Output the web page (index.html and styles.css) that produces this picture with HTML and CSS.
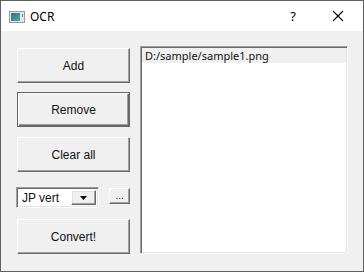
FILE: index.html
```html
<!DOCTYPE html>
<html>
<head>
<meta charset="utf-8">
<link rel="stylesheet" href="styles.css">
</head>
<body>
<div class="window">
  <div class="titlebar">
    <svg class="appicon" width="16" height="12" viewBox="0 0 16 12">
      <defs>
        <linearGradient id="g" x1="0" y1="0" x2="1" y2="1">
          <stop offset="0" stop-color="#2e6f8e"/>
          <stop offset="1" stop-color="#4fae9a"/>
        </linearGradient>
      </defs>
      <rect x="0.5" y="0.5" width="15" height="11" fill="#e8e8e8" stroke="#9a9a9a"/>
      <rect x="2" y="2" width="9" height="8" fill="url(#g)"/>
      <rect x="13" y="3" width="1" height="3" fill="#4a8a9a"/>
    </svg>
    <span class="title">OCR</span>
    <span class="spacer"></span>
    <span class="help">?</span>
    <svg class="close" width="12" height="12" viewBox="0 0 12 12">
      <path d="M1 1 L11 11 M11 1 L1 11" stroke="#000" stroke-width="1.1"/>
    </svg>
  </div>
  <div class="content">
    <div class="left">
      <div class="btn b-add">Add</div>
      <div class="btn b-remove default">Remove</div>
      <div class="btn b-clear">Clear all</div>
      <div class="combo-row">
        <div class="combo">
          <span class="combo-text">JP vert</span>
          <span class="combo-btn"><svg width="7" height="4" viewBox="0 0 7 4"><path d="M0 0 H7 L3.5 4 Z" fill="#000"/></svg></span>
        </div>
        <div class="btn small">...</div>
      </div>
      <div class="btn b-convert">Convert!</div>
    </div>
    <div class="list">
      <div class="item sel">D:/sample/sample1.png</div>
    </div>
  </div>
</div>
</body>
</html>
```
FILE: styles.css
```css
html, body { margin: 0; padding: 0; }
body { width: 364px; height: 272px; overflow: hidden; background: #f0f0f0; }
.window {
  box-sizing: border-box;
  width: 364px; height: 272px;
  border: 1px solid #5f5f5f;
  display: flex; flex-direction: column;
  background: #f0f0f0;
}
.titlebar {
  height: 30px; background: #fff;
  display: flex; align-items: center;
  font-family: "Noto Sans", "Open Sans", sans-serif; font-size: 12px; color: #000;
}
.appicon { margin-left: 8px; margin-top: 1px; }
.title { margin-left: 5px; }
.spacer { flex: 1; }
.help { font-size: 13px; margin-right: 36px; }
.close { margin-right: 19px; }
.content {
  flex: 1;
  display: flex;
  padding: 16px 15px 0 16px;
  font-family: "Liberation Sans", Arial, sans-serif; font-size: 12px; color: #111;
}
.left { width: 113px; display: flex; flex-direction: column; }
.btn {
  box-sizing: border-box;
  height: 35px;
  display: flex; align-items: center; justify-content: center;
  border: 1px solid; border-color: #fff #696969 #696969 #fff;
  box-shadow: inset -1px -1px #a0a0a0;
  background: #f0f0f0;
}
.b-add { margin-top: 1px; }
.b-remove { margin-top: 9px; }
.btn.default {
  border: 1px solid #646464;
  box-shadow: inset 1px 1px #fff, inset -1px -1px #696969, inset -2px -2px #a0a0a0;
}
.b-clear { margin-top: 10px; }
.combo-row { display: flex; align-items: flex-start; margin-top: 15px; height: 20px; }
.combo {
  box-sizing: border-box;
  width: 85px; height: 21px; margin-left: -1px;
  background: #fff;
  border: 1px solid; border-color: #a0a0a0 #fff #fff #a0a0a0;
  box-shadow: inset 1px 1px #696969, inset -1px -1px #e3e3e3;
  display: flex; align-items: center;
  padding: 0 2px 0 5px;
}
.combo-text { flex: 1; font-size: 12px; }
.combo-btn {
  box-sizing: border-box;
  width: 25px; height: 15px;
  border: 1px solid; border-color: #fff #696969 #696969 #fff;
  box-shadow: inset -1px -1px #a0a0a0, inset 1px 1px #e3e3e3;
  background: #f0f0f0;
  display: flex; align-items: center; justify-content: center;
}
.btn.small {
  width: 21px; height: 16px; margin-left: 10px; margin-top: 1px;
  font-size: 10px; align-items: flex-end; padding-bottom: 3px;
  line-height: 8px;
}
.b-convert { margin-top: 12px; }
.list {
  box-sizing: border-box;
  width: 208px; height: 208px;
  margin-left: 10px; margin-top: -1px;
  background: #fff;
  border: 1px solid; border-color: #a0a0a0 #fff #fff #a0a0a0;
  box-shadow: inset 1px 1px #696969, inset -1px -1px #e3e3e3;
  padding: 1px 1px 1px 1px;
  font-family: "Noto Sans", "Open Sans", sans-serif; font-size: 11px;
}
.item { height: 15px; line-height: 15px; padding-left: 3px; margin-left: 0; }
.item.sel { background: #f0f0f0; }
```
